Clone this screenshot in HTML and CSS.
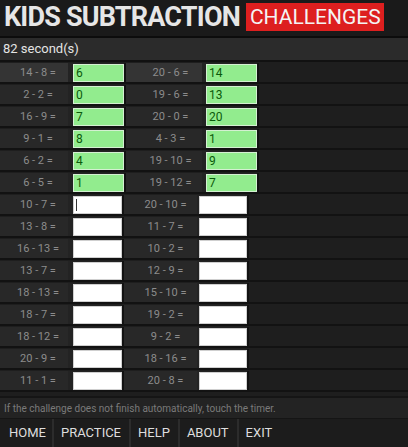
FILE: index.html
```html
<!DOCTYPE html>
<html>
<head>
<meta charset="utf-8">
<link rel="stylesheet" href="styles.css">
</head>
<body>
<div class="app">
  <header class="header">
    <span class="title">KIDS SUBTRACTION</span>
    <span class="badge">CHALLENGES</span>
  </header>
  <div class="timer">82 second(s)</div>
  <div class="grid done">
    <div class="row first"><div class="lbl">14 - 8 =</div><div class="cell"><div class="box ok">6</div></div><div class="lbl l2">20 - 6 =</div><div class="cell"><div class="box ok">14</div></div></div>
    <div class="row"><div class="lbl">2 - 2 =</div><div class="cell"><div class="box ok">0</div></div><div class="lbl l2">19 - 6 =</div><div class="cell"><div class="box ok">13</div></div></div>
    <div class="row"><div class="lbl">16 - 9 =</div><div class="cell"><div class="box ok">7</div></div><div class="lbl l2">20 - 0 =</div><div class="cell"><div class="box ok">20</div></div></div>
    <div class="row"><div class="lbl">9 - 1 =</div><div class="cell"><div class="box ok">8</div></div><div class="lbl l2">4 - 3 =</div><div class="cell"><div class="box ok">1</div></div></div>
    <div class="row"><div class="lbl">6 - 2 =</div><div class="cell"><div class="box ok">4</div></div><div class="lbl l2">19 - 10 =</div><div class="cell"><div class="box ok">9</div></div></div>
    <div class="row"><div class="lbl">6 - 5 =</div><div class="cell"><div class="box ok">1</div></div><div class="lbl l2">19 - 12 =</div><div class="cell"><div class="box ok">7</div></div></div>
  </div>
  <div class="grid todo">
    <div class="row"><div class="lbl">10 - 7 =</div><div class="cell"><div class="box"><span class="caret"></span></div></div><div class="lbl l2">20 - 10 =</div><div class="cell"><div class="box"></div></div></div>
    <div class="row"><div class="lbl">13 - 8 =</div><div class="cell"><div class="box"></div></div><div class="lbl l2">11 - 7 =</div><div class="cell"><div class="box"></div></div></div>
    <div class="row"><div class="lbl">16 - 13 =</div><div class="cell"><div class="box"></div></div><div class="lbl l2">10 - 2 =</div><div class="cell"><div class="box"></div></div></div>
    <div class="row"><div class="lbl">13 - 7 =</div><div class="cell"><div class="box"></div></div><div class="lbl l2">12 - 9 =</div><div class="cell"><div class="box"></div></div></div>
    <div class="row"><div class="lbl">18 - 13 =</div><div class="cell"><div class="box"></div></div><div class="lbl l2">15 - 10 =</div><div class="cell"><div class="box"></div></div></div>
    <div class="row"><div class="lbl">18 - 7 =</div><div class="cell"><div class="box"></div></div><div class="lbl l2">19 - 2 =</div><div class="cell"><div class="box"></div></div></div>
    <div class="row"><div class="lbl">18 - 12 =</div><div class="cell"><div class="box"></div></div><div class="lbl l2">9 - 2 =</div><div class="cell"><div class="box"></div></div></div>
    <div class="row"><div class="lbl">20 - 9 =</div><div class="cell"><div class="box"></div></div><div class="lbl l2">18 - 16 =</div><div class="cell"><div class="box"></div></div></div>
    <div class="row"><div class="lbl">11 - 1 =</div><div class="cell"><div class="box"></div></div><div class="lbl l2">20 - 8 =</div><div class="cell"><div class="box"></div></div></div>
  </div>
  <div class="note">If the challenge does not finish automatically, touch the timer.</div>
  <nav class="nav">
    <span class="item">HOME</span>
    <span class="item">PRACTICE</span>
    <span class="item">HELP</span>
    <span class="item">ABOUT</span>
    <span class="item">EXIT</span>
  </nav>
</div>
</body>
</html>
```

FILE: styles.css
```css
* { box-sizing: border-box; }
html, body { margin: 0; padding: 0; }
body {
  background: #1e1e1e;
  font-family: Roboto, "Liberation Sans", sans-serif;
  width: 408px;
  height: 447px;
  overflow: hidden;
}
.app {
  display: flex;
  flex-direction: column;
  height: 447px;
}
.header {
  height: 38px;
  display: flex;
  align-items: center;
  padding: 0 0 2px 4px;
  background: #1a1a1a;
  border-bottom: 2px solid #0c0c0c;
}
.title {
  color: #e6e6e6;
  font-weight: bold;
  font-size: 27px;
  letter-spacing: -0.8px;
  line-height: 1;
}
.badge {
  margin-left: 6px;
  background: #dd1f1f;
  color: #f4f4f4;
  font-size: 21px;
  line-height: 28px;
  height: 28px;
  padding: 0 3px 0 4px;
}
.timer {
  height: 24px;
  background: #2b2b2b;
  color: #e4e4e4;
  font-size: 13px;
  line-height: 22px;
  padding-left: 3px;
  border-bottom: 2px solid #111;
}
.grid {
  display: flex;
  flex-direction: column;
}
.row {
  display: flex;
  height: 22px;
  padding-top: 1px;
  border-bottom: 2px solid #121212;
}
.lbl {
  color: #8c8c8c;
  font-size: 11px;
  display: flex;
  align-items: center;
  justify-content: center;
  background: #282828;
}
.first .lbl { background: #343434; }
.cell {
  display: flex;
  align-items: center;
  background: #232323;
}
.done .lbl { width: 68px; padding-left: 8px; }
.done .cell { width: 58px; padding-left: 5px; border-right: 2px solid #121212; }
.done .lbl.l2 { width: 76px; padding-left: 13px; }
.done .cell:last-child { width: 57px; padding-left: 4px; }
.todo .lbl { width: 68px; padding-left: 8px; }
.todo .cell { width: 56px; padding-left: 5px; border-right: 2px solid #121212; }
.todo .lbl.l2 { width: 73px; padding-left: 10px; }
.todo .cell:last-child { width: 52px; padding-left: 2px; }
.box {
  width: 51px;
  height: 18px;
  background: #ffffff;
  border: 1px solid #cfcfcf;
  font-size: 12px;
  color: #0b5a0b;
  line-height: 16px;
  padding-left: 2px;
}
.todo .box { width: 49px; }
.box.ok { background: #92ec8e; border-color: #d4f0d2; }
.caret {
  display: block;
  width: 1px;
  height: 12px;
  margin-top: 2px;
  background: #333;
}
.note {
  margin-top: auto;
  height: 23px;
  background: #232323;
  color: #7a7a7a;
  font-size: 10px;
  line-height: 22px;
  padding-left: 4px;
  border-top: 2px solid #151515;
  border-bottom: 1px solid #151515;
}
.nav {
  height: 28px;
  background: #1c1c1c;
  display: flex;
}
.item {
  color: #dedede;
  font-size: 13px;
  line-height: 28px;
  padding: 0 8px 0 7px;
  border-right: 2px solid #2c2c2c;
}
.item:first-child { padding-left: 9px; padding-right: 6px; }
.item:last-child { border-right: none; }
```
